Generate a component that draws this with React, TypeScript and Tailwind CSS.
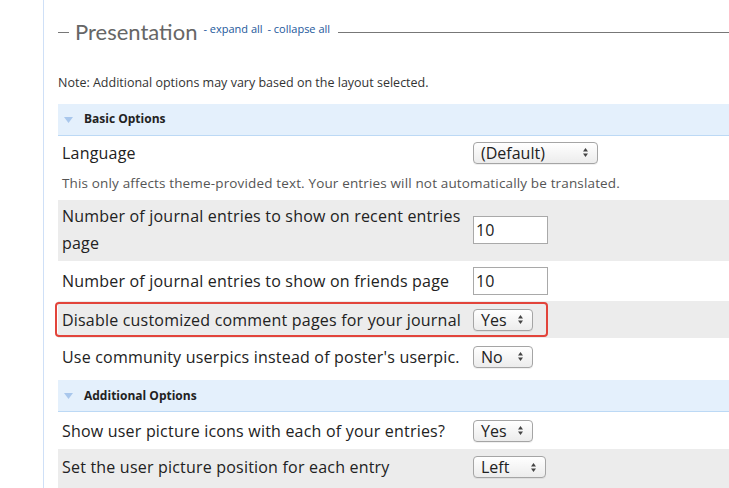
const font = { fontFamily: '"Open Sans", "Lato", sans-serif' };

function Arrows() {
  return (
    <svg width="7" height="11" viewBox="0 0 7 11" className="shrink-0">
      <path d="M3.5 1 L6 4.5 L1 4.5 Z" fill="#444" />
      <path d="M3.5 10 L6 6.5 L1 6.5 Z" fill="#444" />
    </svg>
  );
}

function Select({ value, width }: { value: string; width: string }) {
  return (
    <div
      className={`${width} h-[22px] flex items-center justify-between pl-[7px] pr-[8px] rounded-[4px] border border-[#a5a5a5] bg-gradient-to-b from-white to-[#ececec] shadow-[0_1px_0_rgba(0,0,0,0.06)] text-[16px] text-[#222]`}
    >
      <span className="leading-none">{value}</span>
      <Arrows />
    </div>
  );
}

function TextBox({ value }: { value: string }) {
  return (
    <div className="w-[75px] h-[28px] border border-[#a9a9a9] bg-white flex items-center pl-[2px] text-[16px] text-[#222]">
      {value}
    </div>
  );
}

function Section({ title }: { title: string }) {
  return (
    <div className="h-[32px] flex items-center bg-[#e4f0fc] border-b border-[#bcd9f5] pl-[6px]">
      <svg width="9" height="7" viewBox="0 0 9 7" className="mt-[2px]">
        <path d="M0 0 L9 0 L4.5 6 Z" fill="#a9c7ec" />
      </svg>
      <span className="ml-[11px] text-[12px] font-bold text-[#222]">{title}</span>
    </div>
  );
}

function Row({
  label,
  control,
  gray,
  h,
}: {
  label: React.ReactNode;
  control: React.ReactNode;
  gray?: boolean;
  h: string;
}) {
  return (
    <div className={`${h} flex items-center ${gray ? 'bg-[#ececec]' : 'bg-white'}`}>
      <div className="w-[415px] pl-[4px] text-[16px] tracking-[0.2px] text-[#222]">{label}</div>
      {control}
    </div>
  );
}

export default function App() {
  return (
    <div className="w-[729px] h-[488px] overflow-hidden bg-white flex" style={font}>
      <div className="w-[44px] shrink-0 border-r border-[#cfe0f7]" />
      <div className="flex-1 pl-[14px] flex flex-col">
        <div className="h-[64px] pt-[18px] flex items-start">
          <div className="flex items-center h-[28px] w-full">
            <div className="w-[11px] h-px bg-[#777] mr-[6px]" />
            <span className="text-[22px] text-[#666] leading-none" style={{ fontFamily: '"Lato", sans-serif' }}>
              Presentation
            </span>
            <span className="ml-[6px] -mt-[6px] text-[11px] text-[#23589b]">
              - expand all <span className="ml-[2px]">- collapse all</span>
            </span>
            <div className="flex-1 h-px bg-[#777] ml-[8px]" />
          </div>
        </div>
        <div className="h-[40px] flex items-center text-[12.5px] text-[#333]">
          Note: Additional options may vary based on the layout selected.
        </div>
        <Section title="Basic Options" />
        <div className="h-[64px] flex flex-col">
          <div className="h-[34px] flex items-center">
            <div className="w-[415px] pl-[4px] text-[16px] tracking-[0.2px] text-[#222]">Language</div>
            <Select value="(Default)" width="w-[125px]" />
          </div>
          <div className="pl-[4px] text-[13.5px] tracking-[0.15px] text-[#555] mt-[3px]">
            This only affects theme-provided text. Your entries will not automatically be translated.
          </div>
        </div>
        <Row
          gray
          h="h-[62px]"
          label={<div className="leading-[27px] pr-[6px]">Number of journal entries to show on recent entries page</div>}
          control={<TextBox value="10" />}
        />
        <Row
          h="h-[40px]"
          label="Number of journal entries to show on friends page"
          control={<TextBox value="10" />}
        />
        <div className="relative">
          <Row
            gray
            h="h-[37px]"
            label="Disable customized comment pages for your journal"
            control={<Select value="Yes" width="w-[60px]" />}
          />
          <div className="absolute left-[-3px] top-[1px] w-[493px] h-[35px] rounded-[4px] border-2 border-[#e2443b]" />
        </div>
        <Row
          h="h-[42px] pb-[5px]"
          label="Use community userpics instead of poster's userpic."
          control={<Select value="No" width="w-[60px]" />}
        />
        <Section title="Additional Options" />
        <Row
          h="h-[37px]"
          label="Show user picture icons with each of your entries?"
          control={<Select value="Yes" width="w-[60px]" />}
        />
        <Row
          gray
          h="h-[39px] pb-[3px]"
          label="Set the user picture position for each entry"
          control={<Select value="Left" width="w-[73px]" />}
        />
      </div>
    </div>
  );
}
